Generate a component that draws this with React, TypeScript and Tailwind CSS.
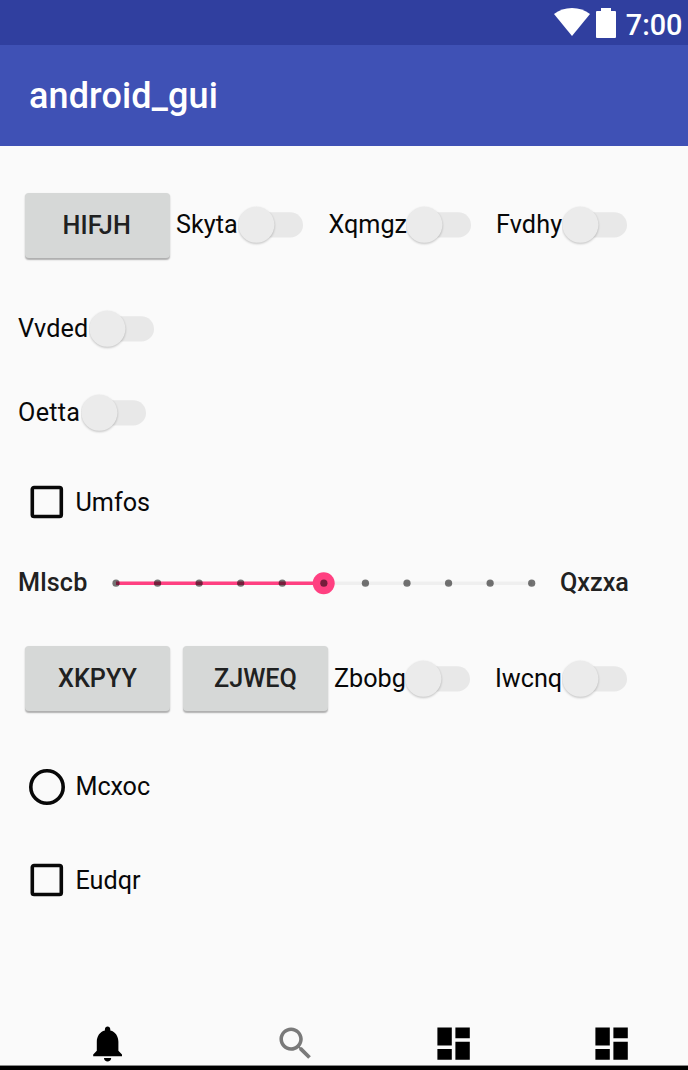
import React from "react";

function Switch({ label, labelClass }: { label: string; labelClass: string }) {
  return (
    <label className="flex h-[48px] items-center">
      <span className={"shrink-0 whitespace-nowrap " + labelClass}>{label}</span>
      <svg width="70" height="48" viewBox="0 0 70 48" className="shrink-0">
        <rect x="6" y="11.3" width="59" height="25.2" rx="12.6" fill="#e8e8e8" />
        <circle cx="18.4" cy="23.8" r="18" fill="#ebebeb" className="drop-shadow-[0_1.5px_1px_rgba(0,0,0,0.24)]" />
      </svg>
    </label>
  );
}

function Button({ children, textClass = "" }: { children: string; textClass?: string }) {
  return (
    <button className="h-[65px] w-[145px] shrink-0 rounded-[4px] bg-[#d6d8d7] font-medium text-[#202121] shadow-[0_1.5px_1.5px_rgba(0,0,0,0.3)]">
      <span className={textClass}>{children}</span>
    </button>
  );
}

function Checkbox({ label }: { label: string }) {
  return (
    <label className="flex h-[44px] items-center pl-[30px]">
      <svg width="34" height="34" viewBox="0 0 34 34" fill="none" className="shrink-0">
        <rect x="2.3" y="2.5" width="29" height="29" rx="1.8" stroke="#080808" strokeWidth="3.6" />
      </svg>
      <span className="ml-[11.500px] pt-[1px]">{label}</span>
    </label>
  );
}

function Icon({ path, color = "#000" }: { path: string; color?: string }) {
  return (
    <svg width="43.2" height="43.2" viewBox="0 0 24 24" fill={color} className="shrink-0">
      <path d={path} />
    </svg>
  );
}

const BELL =
  "M12 22c1.1 0 2-.9 2-2h-4c0 1.1.89 2 2 2zm6-6v-5c0-3.07-1.64-5.64-4.5-6.32V4c0-.83-.67-1.5-1.5-1.5s-1.5.67-1.5 1.5v.68C7.63 5.36 6 7.92 6 11v5l-2 2v1h16v-1l-2-2z";
const SEARCH =
  "M15.5 14h-.79l-.28-.27C15.41 12.59 16 11.11 16 9.5 16 5.91 13.09 3 9.5 3S3 5.91 3 9.5 5.91 16 9.5 16c1.61 0 3.09-.59 4.23-1.57l.27.28v.79l5 4.99L20.49 19l-4.99-5zm-6 0C7.01 14 5 11.99 5 9.5S7.01 5 9.5 5 14 7.01 14 9.5 11.99 14 9.5 14z";
const DASHBOARD = "M3 13h8V3H3v10zm0 8h8v-6H3v6zm10 0h8V11h-8v10zm0-18v6h8V3h-8z";

const TICKS = [0, 1, 2, 3, 4, 5, 6, 7, 8, 9, 10];

export default function App() {
  return (
    <div className="flex h-[1070px] w-[688px] flex-col overflow-hidden bg-[#fafafa] font-['Roboto',sans-serif] text-[25.2px] leading-[30px] text-[#080808]">
      <div className="flex h-[45px] shrink-0 items-center justify-end bg-[#303f9f] pr-[5.500px] text-white">
        <svg width="36" height="45" viewBox="0 0 36 45" fill="#fff">
          <path d="M0 14C5 10 11 8 18 8s13 2 18 6L18 36z" />
        </svg>
        <svg width="20" height="45" viewBox="0 0 20 45" fill="#fff" className="ml-[6.500px]">
          <path d="M1 11H5V8h10v3h4q1 0 1 1V37q0 1-1 1H1Q0 38 0 37V12Q0 11 1 11z" />
        </svg>
        <span className="ml-[9.500px] mt-[4px] text-[28.8px] font-medium">7:00</span>
      </div>
      <header className="flex h-[101px] shrink-0 items-center bg-[#3f51b5] pl-[29px] text-[36px] font-medium tracking-[0.12px] text-white">
        <h1>android_gui</h1>
      </header>

      <main className="flex min-h-0 flex-1 flex-col">
        <div className="mt-[47px] flex h-[65px] items-center pl-[25px]">
          <Button textClass="mr-[1.500px] tracking-[0.2px]">HIFJH</Button>
          <div className="mb-[1px] ml-[6px] flex">
            <Switch label="Skyta" labelClass="w-[62px]" />
            <div className="ml-[20.500px]">
              <Switch label="Xqmgz" labelClass="w-[77.500px]" />
            </div>
            <div className="ml-[20px]">
              <Switch label="Fvdhy" labelClass="w-[66px] tracking-[0.1px]" />
            </div>
          </div>
        </div>
        <div className="mt-[46.500px] pl-[18px]">
          <Switch label="Vvded" labelClass="w-[70.500px] tracking-[0.15px]" />
        </div>
        <div className="mt-[36.500px] pl-[18px]">
          <Switch label="Oetta" labelClass="w-[62.500px] tracking-[0.3px]" />
        </div>
        <div className="mt-[43px]">
          <Checkbox label="Umfos" />
        </div>

        <div className="mt-[39px] flex h-[40px] items-center pl-[18px] font-medium text-[#212121]">
          <span className="w-[86px] tracking-[0.15px]">Mlscb</span>
          <svg width="440" height="40" viewBox="104 0 440 40" className="shrink-0">
            <path d="M116 20.200H532" stroke="#efefef" strokeWidth="3.6" />
            <path d="M116 20.200H324" stroke="#ff4081" strokeWidth="3.6" />
            <circle cx="323.7" cy="20.2" r="11" fill="#ff4081" />
            {TICKS.map((n) => (
              <circle key={n} cx={116 + n * 41.57} cy="20.2" r="3.6" fill="#000" fillOpacity="0.54" />
            ))}
          </svg>
          <span className="ml-[16px]">Qxzxa</span>
        </div>

        <div className="mt-[43px] flex h-[65px] items-center pl-[25px]">
          <Button>XKPYY</Button>
          <div className="ml-[13px] flex">
            <Button>ZJWEQ</Button>
          </div>
          <div className="ml-[6px] flex">
            <Switch label="Zbobg" labelClass="w-[71px]" />
            <div className="ml-[20px]">
              <Switch label="Iwcnq" labelClass="w-[66.500px]" />
            </div>
          </div>
        </div>

        <label className="mt-[54px] flex h-[44px] items-center pl-[29px]">
          <svg width="36" height="36" viewBox="0 0 36 36" fill="none" className="shrink-0">
            <circle cx="18" cy="18" r="16.200" stroke="#080808" strokeWidth="3.6" />
          </svg>
          <span className="ml-[10.500px] tracking-[-0.1px]">Mcxoc</span>
        </label>
        <div className="mt-[49px]">
          <Checkbox label="Eudqr" />
        </div>
      </main>

      <nav className="flex h-[43px] shrink-0 pl-[86.400px]">
        <Icon path={BELL} />
        <div className="ml-[144px]">
          <Icon path={SEARCH} color="#7a7a7a" />
        </div>
        <div className="ml-[115px]">
          <Icon path={DASHBOARD} />
        </div>
        <div className="ml-[115px]">
          <Icon path={DASHBOARD} />
        </div>
      </nav>
      <div className="h-[5px] shrink-0 border-t border-[#8a8a8a] bg-black" />
    </div>
  );
}
